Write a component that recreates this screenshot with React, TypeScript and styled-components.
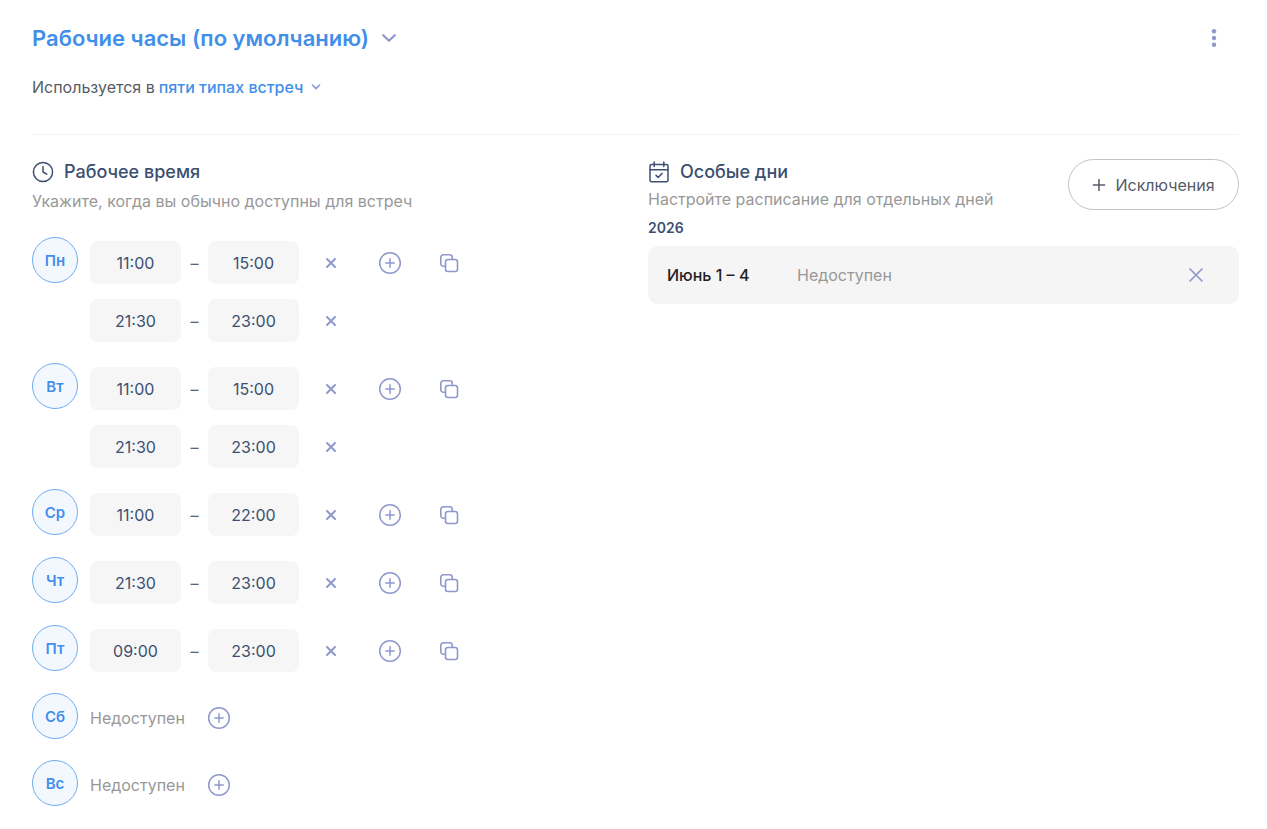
import React, { useState } from "react";
import styled, { createGlobalStyle } from "styled-components";

const Global = createGlobalStyle`
  *, *::before, *::after { box-sizing: border-box; }
  body { margin: 0; background: #fff; font-family: Inter, "Noto Sans", sans-serif; color: #3f4a5c; }
  h1, h2, h3, p, ul { margin: 0; padding: 0; }
  ul { list-style: none; }
  button, input { font: inherit; color: inherit; }
`;

const lilac = "#8f98cb";
const navy = "#3d4f70";
const blue = "#428fea";

const Page = styled.main`
  padding: 20px 28px 20px 32px;
`;

const Header = styled.header`
  display: flex;
  justify-content: space-between;
  align-items: flex-start;
  padding-bottom: 35px;
  border-bottom: 1px solid #f3f3f3;
`;

const HeaderTitles = styled.div`
  display: flex;
  flex-direction: column;
  align-items: flex-start;
  gap: 19px;
`;

const PlainButton = styled.button`
  display: inline-flex;
  align-items: center;
  padding: 0;
  border: 0;
  background: none;
  cursor: pointer;
`;

const Title = styled.h1`
  font-size: 22px;
  line-height: 36px;
  font-weight: 600;
`;

const TitleButton = styled(PlainButton)`
  gap: 12px;
  color: ${blue};
`;

const Usage = styled.p`
  display: flex;
  gap: 4px;
  font-size: 16px;
  line-height: 24px;
  color: #555b65;
`;

const UsageButton = styled(PlainButton)`
  gap: 8px;
  font-weight: 500;
  color: ${blue};
`;

const MenuButton = styled(PlainButton)`
  justify-content: center;
  width: 50px;
  height: 36px;
  color: ${lilac};
`;

const Columns = styled.div`
  display: grid;
  grid-template-columns: 1fr 1fr;
  gap: 25px;
`;

const Section = styled.section`
  padding-top: 24px;
`;

const Heading = styled.h2`
  display: flex;
  align-items: center;
  gap: 10px;
  font-size: 18px;
  line-height: 26px;
  font-weight: 500;
  color: ${navy};
`;

const Hint = styled.p<{ $gap: number }>`
  margin-top: ${(p) => p.$gap}px;
  font-size: 16px;
  line-height: 24px;
  color: #989898;
`;

const Days = styled.ul`
  display: flex;
  flex-direction: column;
  gap: 21px;
  margin-top: 24px;
`;

const Day = styled.li`
  display: flex;
  gap: 12px;
`;

const DayBadge = styled.span`
  display: flex;
  align-items: center;
  justify-content: center;
  flex: none;
  width: 46px;
  height: 46px;
  border: 1px solid #6fabf0;
  border-radius: 50%;
  background: #f3f8fe;
  font-size: 15px;
  font-weight: 600;
  color: ${blue};
`;

const Slots = styled.div`
  display: flex;
  flex-direction: column;
  gap: 15px;
  padding-top: 4px;
`;

const Slot = styled.div<{ $off?: boolean }>`
  display: flex;
  align-items: center;
  height: ${(p) => (p.$off ? 42 : 43)}px;
`;

const TimeInput = styled.input`
  width: 91px;
  height: 43px;
  padding: 0;
  border: 0;
  border-radius: 8px;
  background: #f6f6f6;
  text-align: center;
  font-size: 16px;
  color: ${navy};
`;

const Dash = styled.span`
  width: 27px;
  text-align: center;
  font-size: 16px;
  color: #5c6470;
`;

const Actions = styled.div`
  display: flex;
  gap: 23px;
  margin-left: 14px;
`;

const IconButton = styled(PlainButton)`
  justify-content: center;
  width: 36px;
  height: 36px;
  color: ${lilac};
`;

const Unavailable = styled.span`
  font-size: 16px;
  color: #989898;
`;

const OffAction = styled.div`
  margin-left: 16px;
  display: flex;
`;

const SpecialTop = styled.div`
  display: flex;
  justify-content: space-between;
  align-items: flex-start;
`;

const AddButton = styled(PlainButton)`
  justify-content: center;
  gap: 9px;
  width: 171px;
  height: 51px;
  border: 1px solid #c2c2c2;
  border-radius: 26px;
  background: #fff;
  font-size: 16px;
  color: #555b65;
`;

const SpecialTitles = styled.div``;

const Year = styled.h3`
  margin-top: 8px;
  font-size: 14px;
  line-height: 18px;
  font-weight: 600;
  color: ${navy};
`;

const Exception = styled.div`
  display: grid;
  grid-template-columns: 130px 1fr auto;
  align-items: center;
  height: 58px;
  margin-top: 9px;
  padding: 0 25px 0 19px;
  border-radius: 10px;
  background: #f5f5f5;
`;

const ExceptionDate = styled.span`
  font-size: 16px;
  font-weight: 500;
  color: #1f2126;
`;

const Svg = ({ w, h = w, sw = 1.5, children }: { w: number; h?: number; sw?: number; children: React.ReactNode }) => (
  <svg width={w} height={h} viewBox={`0 0 ${w} ${h}`} fill="none" stroke="currentColor" strokeWidth={sw} strokeLinecap="round" strokeLinejoin="round" aria-hidden="true">
    {children}
  </svg>
);

const ChevronIcon = ({ small }: { small?: boolean }) =>
  small ? (
    <Svg w={10} h={8} sw={1.6}><path d="M1.4 2 5 5.6 8.6 2" stroke={lilac} /></Svg>
  ) : (
    <Svg w={16} h={12} sw={2.2}><path d="M2.2 3.2l5.8 5.6 5.8-5.6" stroke={lilac} /></Svg>
  );

const DotsIcon = () => (
  <svg width="6" height="20" viewBox="0 0 6 20" fill="currentColor" aria-hidden="true">
    <circle cx="3" cy="3.2" r="2.2" /><circle cx="3" cy="10" r="2.2" /><circle cx="3" cy="16.8" r="2.2" />
  </svg>
);

const ClockIcon = () => (
  <Svg w={22}><circle cx="11" cy="11" r="9.6" /><path d="M11 5.5V11l3.8 2.2" /></Svg>
);

const CalendarIcon = () => (
  <Svg w={22}>
    <rect x="2" y="3.4" width="18" height="17.4" rx="1.6" />
    <path d="M2 8.8h18M6.2 1v4.6M15.8 1v4.6M8 14.4l2.2 2 3.8-4" />
  </Svg>
);

const CrossIcon = () => <Svg w={12} sw={2}><path d="M2 2l8 8M10 2l-8 8" /></Svg>;
const BigCrossIcon = () => <Svg w={16} sw={1.7}><path d="M2 2l12 12M14 2 2 14" /></Svg>;
const AddCircleIcon = () => (
  <Svg w={24}><circle cx="12" cy="12" r="10.3" /><path d="M12 7.8v8.4M7.8 12h8.4" /></Svg>
);
const CopyIcon = () => (
  <Svg w={20} sw={1.6}>
    <rect x="6.5" y="6.5" width="12" height="12" rx="2.4" />
    <path d="M6.5 13.3H4.4a2.6 2.6 0 0 1-2.6-2.6V4.4a2.6 2.6 0 0 1 2.6-2.6h6.3a2.6 2.6 0 0 1 2.6 2.6v2.1" />
  </Svg>
);
const PlusIcon = () => <Svg w={14}><path d="M7 1.4v11.2M1.4 7h11.2" /></Svg>;

type DayData = { name: string; slots: [string, string][] };

const week: DayData[] = [
  { name: "Пн", slots: [["11:00", "15:00"], ["21:30", "23:00"]] },
  { name: "Вт", slots: [["11:00", "15:00"], ["21:30", "23:00"]] },
  { name: "Ср", slots: [["11:00", "22:00"]] },
  { name: "Чт", slots: [["21:30", "23:00"]] },
  { name: "Пт", slots: [["09:00", "23:00"]] },
  { name: "Сб", slots: [] },
  { name: "Вс", slots: [] },
];

function TimeField({ label, initial }: { label: string; initial: string }) {
  const [value, setValue] = useState(initial);
  return <TimeInput type="text" aria-label={label} value={value} onChange={(e) => setValue(e.target.value)} />;
}

function DayRow({ day }: { day: DayData }) {
  return (
    <Day>
      <DayBadge>{day.name}</DayBadge>
      <Slots>
        {day.slots.map(([from, to], i) => (
          <Slot key={from}>
            <TimeField label={`${day.name}, начало`} initial={from} />
            <Dash>–</Dash>
            <TimeField label={`${day.name}, конец`} initial={to} />
            <Actions>
              <IconButton type="button" aria-label="Удалить"><CrossIcon /></IconButton>
              {i === 0 && (
                <>
                  <IconButton type="button" aria-label="Добавить"><AddCircleIcon /></IconButton>
                  <IconButton type="button" aria-label="Копировать"><CopyIcon /></IconButton>
                </>
              )}
            </Actions>
          </Slot>
        ))}
        {day.slots.length === 0 && (
          <Slot $off>
            <Unavailable>Недоступен</Unavailable>
            <OffAction>
              <IconButton type="button" aria-label="Добавить"><AddCircleIcon /></IconButton>
            </OffAction>
          </Slot>
        )}
      </Slots>
    </Day>
  );
}

export default function App() {
  return (
    <>
      <Global />
      <Page>
        <Header>
          <HeaderTitles>
            <Title>
              <TitleButton type="button">Рабочие часы (по умолчанию)<ChevronIcon /></TitleButton>
            </Title>
            <Usage>
              Используется в
              <UsageButton type="button">пяти типах встреч<ChevronIcon small /></UsageButton>
            </Usage>
          </HeaderTitles>
          <MenuButton type="button" aria-label="Меню"><DotsIcon /></MenuButton>
        </Header>
        <Columns>
          <Section>
            <Heading><ClockIcon />Рабочее время</Heading>
            <Hint $gap={4}>Укажите, когда вы обычно доступны для встреч</Hint>
            <Days>
              {week.map((day) => <DayRow key={day.name} day={day} />)}
            </Days>
          </Section>
          <Section>
            <SpecialTop>
              <SpecialTitles>
                <Heading><CalendarIcon />Особые дни</Heading>
                <Hint $gap={2}>Настройте расписание для отдельных дней</Hint>
              </SpecialTitles>
              <AddButton type="button"><PlusIcon />Исключения</AddButton>
            </SpecialTop>
            <Year>2026</Year>
            <Exception>
              <ExceptionDate>Июнь 1 – 4</ExceptionDate>
              <Unavailable>Недоступен</Unavailable>
              <IconButton type="button" aria-label="Удалить"><BigCrossIcon /></IconButton>
            </Exception>
          </Section>
        </Columns>
      </Page>
    </>
  );
}
